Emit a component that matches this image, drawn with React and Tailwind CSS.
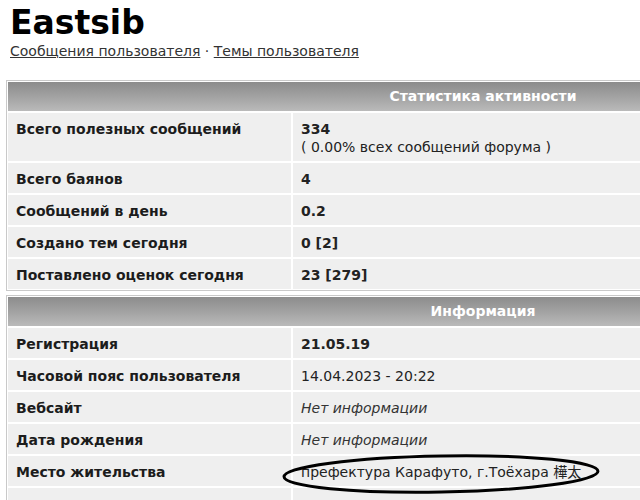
import React from "react";

const stats = [
  { label: "Всего полезных сообщений", value: "334", sub: "( 0.00% всех сообщений форума )" },
  { label: "Всего баянов", value: "4" },
  { label: "Сообщений в день", value: "0.2" },
  { label: "Создано тем сегодня", value: "0 [2]" },
  { label: "Поставлено оценок сегодня", value: "23 [279]" },
];

const info = [
  { label: "Регистрация", value: "21.05.19", kind: "bold" },
  { label: "Часовой пояс пользователя", value: "14.04.2023 - 20:22", kind: "plain" },
  { label: "Вебсайт", value: "Нет информации", kind: "italic" },
  { label: "Дата рождения", value: "Нет информации", kind: "italic" },
  { label: "Место жительства", value: "префектура Карафуто, г.Тоёхара 樺太", kind: "plain", circled: true },
  { label: "", value: "", kind: "plain" },
];

const Header = ({ title }) => (
  <div className="col-span-2 grid grid-cols-[283px_380px] gap-[2px] h-[29px] bg-gradient-to-b from-[#8c8c8c] via-[#a2a2a2] to-[#bababa]">
    <div />
    <div className="flex items-center justify-center text-white font-bold text-[14px]">
      {title}
    </div>
  </div>
);

const Label = ({ children }) => (
  <div className="bg-[#efefef] px-[8px] pt-[7px] pb-[5px] min-h-[30px] font-bold text-[14px] leading-[18px] text-[#1c1c1c]">
    {children}
  </div>
);

export default function App() {
  return (
    <div className="w-[640px] h-[500px] overflow-hidden bg-white font-['DejaVu_Sans',sans-serif] text-[#222]">
      <div className="pl-[10px] pt-[4px]">
        <h1 className="text-[33px] leading-[38px] font-bold text-black">Eastsib</h1>
        <div className="text-[14px] leading-[18px] text-[#333]">
          <a className="underline">Сообщения пользователя</a>
          <span> · </span>
          <a className="underline">Темы пользователя</a>
        </div>
      </div>

      <div className="ml-[6px] mt-[20px] w-[690px] border border-[#c9c9c9] bg-white p-[1px] grid grid-cols-[283px_380px] gap-[2px]">
        <Header title="Статистика активности" />
        {stats.map((r) => (
          <React.Fragment key={r.label}>
            <Label>{r.label}</Label>
            <div className="bg-[#efefef] px-[8px] pt-[7px] pb-[5px] text-[14px] leading-[18px]">
              <div className="font-bold">{r.value}</div>
              {r.sub && <div>{r.sub}</div>}
            </div>
          </React.Fragment>
        ))}
      </div>

      <div className="ml-[6px] mt-[4px] w-[690px] border border-[#c9c9c9] bg-white p-[1px] grid grid-cols-[283px_380px] gap-[2px]">
        <Header title="Информация" />
        {info.map((r, i) => (
          <React.Fragment key={i}>
            <Label>{r.label}</Label>
            <div
              className={
                "relative bg-[#efefef] px-[8px] pt-[7px] pb-[5px] text-[14px] leading-[18px] " +
                (r.kind === "bold" ? "font-bold" : r.kind === "italic" ? "italic text-[#333]" : "")
              }
            >
              <span className="font-['DejaVu_Sans','Noto_Sans_CJK_JP',sans-serif]">{r.value}</span>
              {r.circled && (
                <svg
                  className="absolute left-[-12px] top-[-4px] pointer-events-none z-10"
                  width="324"
                  height="46"
                  viewBox="0 0 324 46"
                >
                  <ellipse
                    cx="160"
                    cy="22"
                    rx="157"
                    ry="18"
                    fill="none"
                    stroke="#000"
                    strokeWidth="3"
                    transform="rotate(-1 160 22)"
                  />
                </svg>
              )}
            </div>
          </React.Fragment>
        ))}
      </div>
    </div>
  );
}
